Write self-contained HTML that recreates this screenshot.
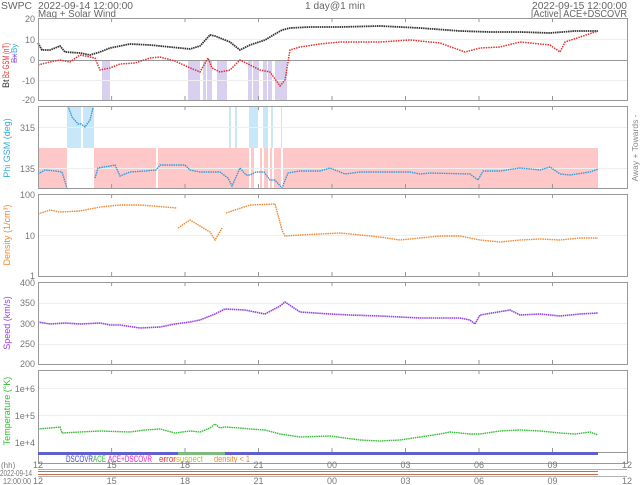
<!DOCTYPE html>
<html><head><meta charset="utf-8"><style>
html,body{margin:0;padding:0;background:#fff;}
svg{display:block;font-family:"Liberation Sans","DejaVu Sans",sans-serif;}
</style></head><body>
<svg width="640" height="485" viewBox="0 0 640 485" xmlns="http://www.w3.org/2000/svg">
<rect width="640" height="485" fill="#fff"/>
<g font-size="10" fill="#666">
<text x="1" y="9" textLength="31" lengthAdjust="spacingAndGlyphs">SWPC</text>
<text x="38" y="9" textLength="95" lengthAdjust="spacingAndGlyphs">2022-09-14 12:00:00</text>
<text x="38" y="17" textLength="78" lengthAdjust="spacingAndGlyphs">Mag + Solar Wind</text>
<text x="305" y="9" textLength="60" lengthAdjust="spacingAndGlyphs">1 day@1 min</text>
<text x="532" y="9" textLength="95" lengthAdjust="spacingAndGlyphs">2022-09-15 12:00:00</text>
<text x="531" y="17" textLength="96" lengthAdjust="spacingAndGlyphs">[Active] ACE+DSCOVR</text>
</g>

<!-- panel 1 -->
<g fill="#d9d0f0">
<rect x="102" y="60" width="8" height="40"/><rect x="188" y="60" width="12" height="40"/>
<rect x="203" y="60" width="3" height="40"/><rect x="207" y="60" width="5" height="40"/>
<rect x="217" y="60" width="10" height="40"/><rect x="248" y="60" width="4" height="40"/>
<rect x="253" y="60" width="6" height="40"/><rect x="263" y="60" width="4" height="40"/>
<rect x="268" y="60" width="4" height="40"/><rect x="275" y="60" width="12" height="40"/>
</g>
<g stroke="#eee" stroke-width="1"><line x1="38" y1="39.5" x2="627" y2="39.5"/><line x1="38" y1="80.5" x2="627" y2="80.5"/></g>
<line x1="38" y1="60.5" x2="627" y2="60.5" stroke="#999"/>
<polyline fill="none" stroke="#333" stroke-width="1.8" stroke-dasharray="1.5 0.7" points="38,43 42,50 50,50 60,46 65,52 80,53 90,55 100,52 110,48 130,44 150,45 170,47 190,49 200,46 210,35 215,36 230,42 240,50 250,45 265,40 275,34 282,30 290,28 310,27 340,27 380,26 420,28 460,31 490,32 520,32 550,33 575,31 598,31"/>
<polyline fill="none" stroke="#e03030" stroke-width="1.5" stroke-dasharray="1.5 1" points="38,65 50,62 60,60 70,62 80,55 95,58 100,70 110,68 120,64 135,63 150,58 160,57 175,61 188,67 200,72 208,58 212,68 220,72 230,70 240,60 250,65 260,70 270,72 280,86 285,80 290,50 300,47 320,44 340,42 380,42 410,40 440,43 465,52 480,48 500,47 520,42 550,45 560,52 565,42 580,37 598,31"/>
<rect x="38.5" y="18.5" width="589" height="82" fill="none" stroke="#999"/>
<g font-size="9" fill="#777" text-anchor="end"><text x="35" y="22">20</text><text x="35" y="43">10</text><text x="35" y="63">0</text><text x="35" y="84">-10</text><text x="35" y="103">-20</text></g>
<g transform="translate(9,60) rotate(-90)" font-size="9"><text fill="#333" x="-28">Bt</text><text fill="#e03030" x="-18" textLength="35" lengthAdjust="spacingAndGlyphs">Bz GSM (nT)</text></g>
<g transform="translate(17,60) rotate(-90)" font-size="8"><text fill="#9966dd" x="-3" text-decoration="line-through">Bx</text><text fill="#33aadd" x="7">By</text></g>

<!-- panel 2 -->
<rect x="38" y="148" width="560" height="40" fill="#ffc8c8"/>
<g fill="#fff"><rect x="67" y="148" width="27" height="40"/><rect x="156" y="148" width="2" height="40"/><rect x="249" y="148" width="2" height="40"/><rect x="254" y="148" width="6" height="40"/><rect x="262" y="148" width="2" height="40"/><rect x="268" y="148" width="2" height="40"/><rect x="272" y="148" width="2" height="40"/><rect x="281" y="148" width="2" height="40"/></g>
<g fill="#c8e8fa"><rect x="67" y="106" width="14" height="42"/><rect x="83" y="106" width="11" height="42"/><rect x="229" y="106" width="2" height="42"/><rect x="235" y="106" width="2" height="42"/><rect x="249" y="106" width="9" height="42"/><rect x="263" y="106" width="5" height="42"/><rect x="271" y="106" width="2" height="42"/><rect x="281" y="106" width="1" height="42"/></g>
<g stroke="#eee"><line x1="38" y1="127.5" x2="627" y2="127.5"/><line x1="38" y1="168.5" x2="627" y2="168.5"/></g>
<polyline fill="none" stroke="#3399dd" stroke-width="1.4" stroke-dasharray="1.5 0.8" points="38,174 45,170 55,171 62,172 67,188"/>
<polyline fill="none" stroke="#3399dd" stroke-width="1.4" stroke-dasharray="1.5 0.8" points="68,106 72,117 78,124 81,124 85,127 90,120 93,108"/>
<polyline fill="none" stroke="#3399dd" stroke-width="1.4" stroke-dasharray="1.5 0.8" points="95,178 98,168 110,166 115,165 120,176 130,172 145,171 156,170 160,165 185,165 190,170 200,172 220,172 228,178 232,186 240,168 246,175 250,175 256,172 264,172 270,180 275,180 282,188 288,173 300,171 320,171 330,168 345,174 360,172 380,172 410,172 420,174 430,173 470,174 478,180 483,171 500,171 520,168 540,170 550,167 560,174 570,175 590,172 598,169"/>
<rect x="38.5" y="106.5" width="589" height="82" fill="none" stroke="#999"/>
<g font-size="9" fill="#777" text-anchor="end"><text x="35" y="131">315</text><text x="35" y="172">135</text></g>
<text transform="translate(10,148) rotate(-90)" font-size="9" fill="#33aadd" text-anchor="middle">Phi GSM (deg)</text>
<text transform="translate(638,148) rotate(-90)" font-size="8.5" fill="#888" text-anchor="middle">Away +   Towards -</text>

<!-- panel 3 -->
<g stroke="#eee"><line x1="38" y1="235.5" x2="627" y2="235.5"/></g>
<polyline fill="none" stroke="#ee8833" stroke-width="1.4" stroke-dasharray="1.5 0.8" points="38,214 50,210 60,212 80,211 100,207 120,205 140,205 165,207 177,208"/>
<polyline fill="none" stroke="#ee8833" stroke-width="1.4" stroke-dasharray="1.5 0.8" points="178,228 190,220 200,226 210,232 215,240 222,228"/>
<polyline fill="none" stroke="#ee8833" stroke-width="1.4" stroke-dasharray="1.5 0.8" points="226,213 250,205 275,204 278,215 282,230 285,236 300,235 340,233 380,237 400,240 420,238 440,236 460,236 480,240 500,242 520,240 540,239 560,240 580,238 598,238"/>
<rect x="38.5" y="194.5" width="589" height="82" fill="none" stroke="#999"/>
<g font-size="9" fill="#777" text-anchor="end"><text x="35" y="198">100</text><text x="35" y="239">10</text><text x="35" y="279">1</text></g>
<text transform="translate(10,235) rotate(-90)" font-size="9" fill="#ee8833" text-anchor="middle">Density (1/cm³)</text>

<!-- panel 4 -->
<g stroke="#eee"><line x1="38" y1="303.5" x2="627" y2="303.5"/><line x1="38" y1="323.5" x2="627" y2="323.5"/><line x1="38" y1="344.5" x2="627" y2="344.5"/></g>
<polyline fill="none" stroke="#9944dd" stroke-width="1.6" stroke-dasharray="1.5 0.6" points="38,322 50,324 65,323 80,324 100,323 110,325 120,325 140,328 160,327 175,324 190,322 200,320 215,314 225,309 245,310 265,314 280,306 285,302 300,312 330,314 350,315 380,316 420,318 460,318 470,320 475,324 480,315 510,310 520,315 540,314 560,316 580,314 598,313"/>
<rect x="38.5" y="282.5" width="589" height="82" fill="none" stroke="#999"/>
<g font-size="9" fill="#777" text-anchor="end"><text x="35" y="286">400</text><text x="35" y="306">350</text><text x="35" y="327">300</text><text x="35" y="347">250</text><text x="35" y="367">200</text></g>
<text transform="translate(10,323) rotate(-90)" font-size="9" fill="#9944dd" text-anchor="middle">Speed (km/s)</text>

<!-- panel 5 -->
<g stroke="#eee"><line x1="38" y1="388.5" x2="627" y2="388.5"/><line x1="38" y1="415.5" x2="627" y2="415.5"/></g>
<polyline fill="none" stroke="#33bb33" stroke-width="1.4" stroke-dasharray="1.5 0.7" points="38,429 50,428 60,427 62,433 80,432 100,431 130,432 145,430 160,429 175,433 190,431 200,432 210,428 215,424 220,428 225,427 240,428 250,429 265,430 280,434 300,437 330,436 360,440 380,441 400,440 420,437 440,434 450,432 470,434 480,434 500,431 520,430 540,431 560,433 575,434 590,432 598,435"/>
<rect x="38.5" y="370.5" width="589" height="82" fill="none" stroke="#999"/>
<g font-size="9" fill="#777" text-anchor="end"><text x="35" y="392">1e+6</text><text x="35" y="419">1e+5</text><text x="35" y="446">1e+4</text></g>
<text transform="translate(10,411) rotate(-90)" font-size="9" fill="#33bb33" text-anchor="middle">Temperature (°K)</text>

<g stroke="#999">
<path d="M111.6 18v4M185 18v4M258.5 18v4M332 18v4M405.5 18v4M479 18v4M552.5 18v4
M111.6 106v4M185 106v4M258.5 106v4M332 106v4M405.5 106v4M479 106v4M552.5 106v4
M111.6 194v4M185 194v4M258.5 194v4M332 194v4M405.5 194v4M479 194v4M552.5 194v4
M111.6 282v4M185 282v4M258.5 282v4M332 282v4M405.5 282v4M479 282v4M552.5 282v4
M111.6 370v4M185 370v4M258.5 370v4M332 370v4M405.5 370v4M479 370v4M552.5 370v4
M111.6 96v4M185 96v4M258.5 96v4M332 96v4M405.5 96v4M479 96v4M552.5 96v4
M111.6 184v4M185 184v4M258.5 184v4M332 184v4M405.5 184v4M479 184v4M552.5 184v4
M111.6 272v4M185 272v4M258.5 272v4M332 272v4M405.5 272v4M479 272v4M552.5 272v4
M111.6 360v4M185 360v4M258.5 360v4M332 360v4M405.5 360v4M479 360v4M552.5 360v4
M111.6 448v4M185 448v4M258.5 448v4M332 448v4M405.5 448v4M479 448v4M552.5 448v4"/>
</g>

<!-- bottom bar -->
<rect x="38.5" y="452.5" width="589" height="11" fill="none" stroke="#999"/>
<rect x="38" y="452" width="560" height="3" fill="#6060cc"/>
<rect x="178" y="452" width="47" height="3" fill="#7cbb7c"/>
<g font-size="9">
<text x="66" y="462" fill="#4444dd" textLength="27" lengthAdjust="spacingAndGlyphs">DSCOVR</text><text x="93" y="462" fill="#33bb33" textLength="13" lengthAdjust="spacingAndGlyphs">ACE</text>
<text x="108" y="462" fill="#ee22cc" textLength="44" lengthAdjust="spacingAndGlyphs">ACE+DSCOVR</text>
<text x="159" y="462" fill="#ee3333" textLength="17" lengthAdjust="spacingAndGlyphs">error</text><text x="176" y="462" fill="#ddbb00" textLength="27" lengthAdjust="spacingAndGlyphs">suspect</text>
<text x="214" y="462" fill="#ee8833" textLength="36" lengthAdjust="spacingAndGlyphs">density &lt; 1</text>
</g>
<line x1="38" y1="471.5" x2="598" y2="471.5" stroke="#c07050" stroke-width="1"/>
<line x1="38" y1="474.5" x2="598" y2="474.5" stroke="#c07050" stroke-width="1"/>
<line x1="38" y1="469.5" x2="627" y2="469.5" stroke="#999" stroke-width="0.8"/>
<line x1="38" y1="476.5" x2="627" y2="476.5" stroke="#999" stroke-width="0.8"/>
<g font-size="9" fill="#777" text-anchor="middle">
<text x="38" y="468">12</text><text x="111.6" y="468">15</text><text x="185" y="468">18</text><text x="258.5" y="468">21</text><text x="332" y="468">00</text><text x="405.5" y="468">03</text><text x="479" y="468">06</text><text x="552.5" y="468">09</text><text x="627" y="468">12</text>
<text x="38" y="484">12</text><text x="111.6" y="484">15</text><text x="185" y="484">18</text><text x="258.5" y="484">21</text><text x="332" y="484">00</text><text x="405.5" y="484">03</text><text x="479" y="484">06</text><text x="552.5" y="484">09</text><text x="627" y="484">12</text>
</g>
<g font-size="8" fill="#777"><text x="1" y="468">(hh)</text><text x="0" y="476" textLength="32" lengthAdjust="spacingAndGlyphs">2022-09-14</text><text x="3" y="484" textLength="28" lengthAdjust="spacingAndGlyphs">12:00:00</text></g>
</svg>
</body></html>
